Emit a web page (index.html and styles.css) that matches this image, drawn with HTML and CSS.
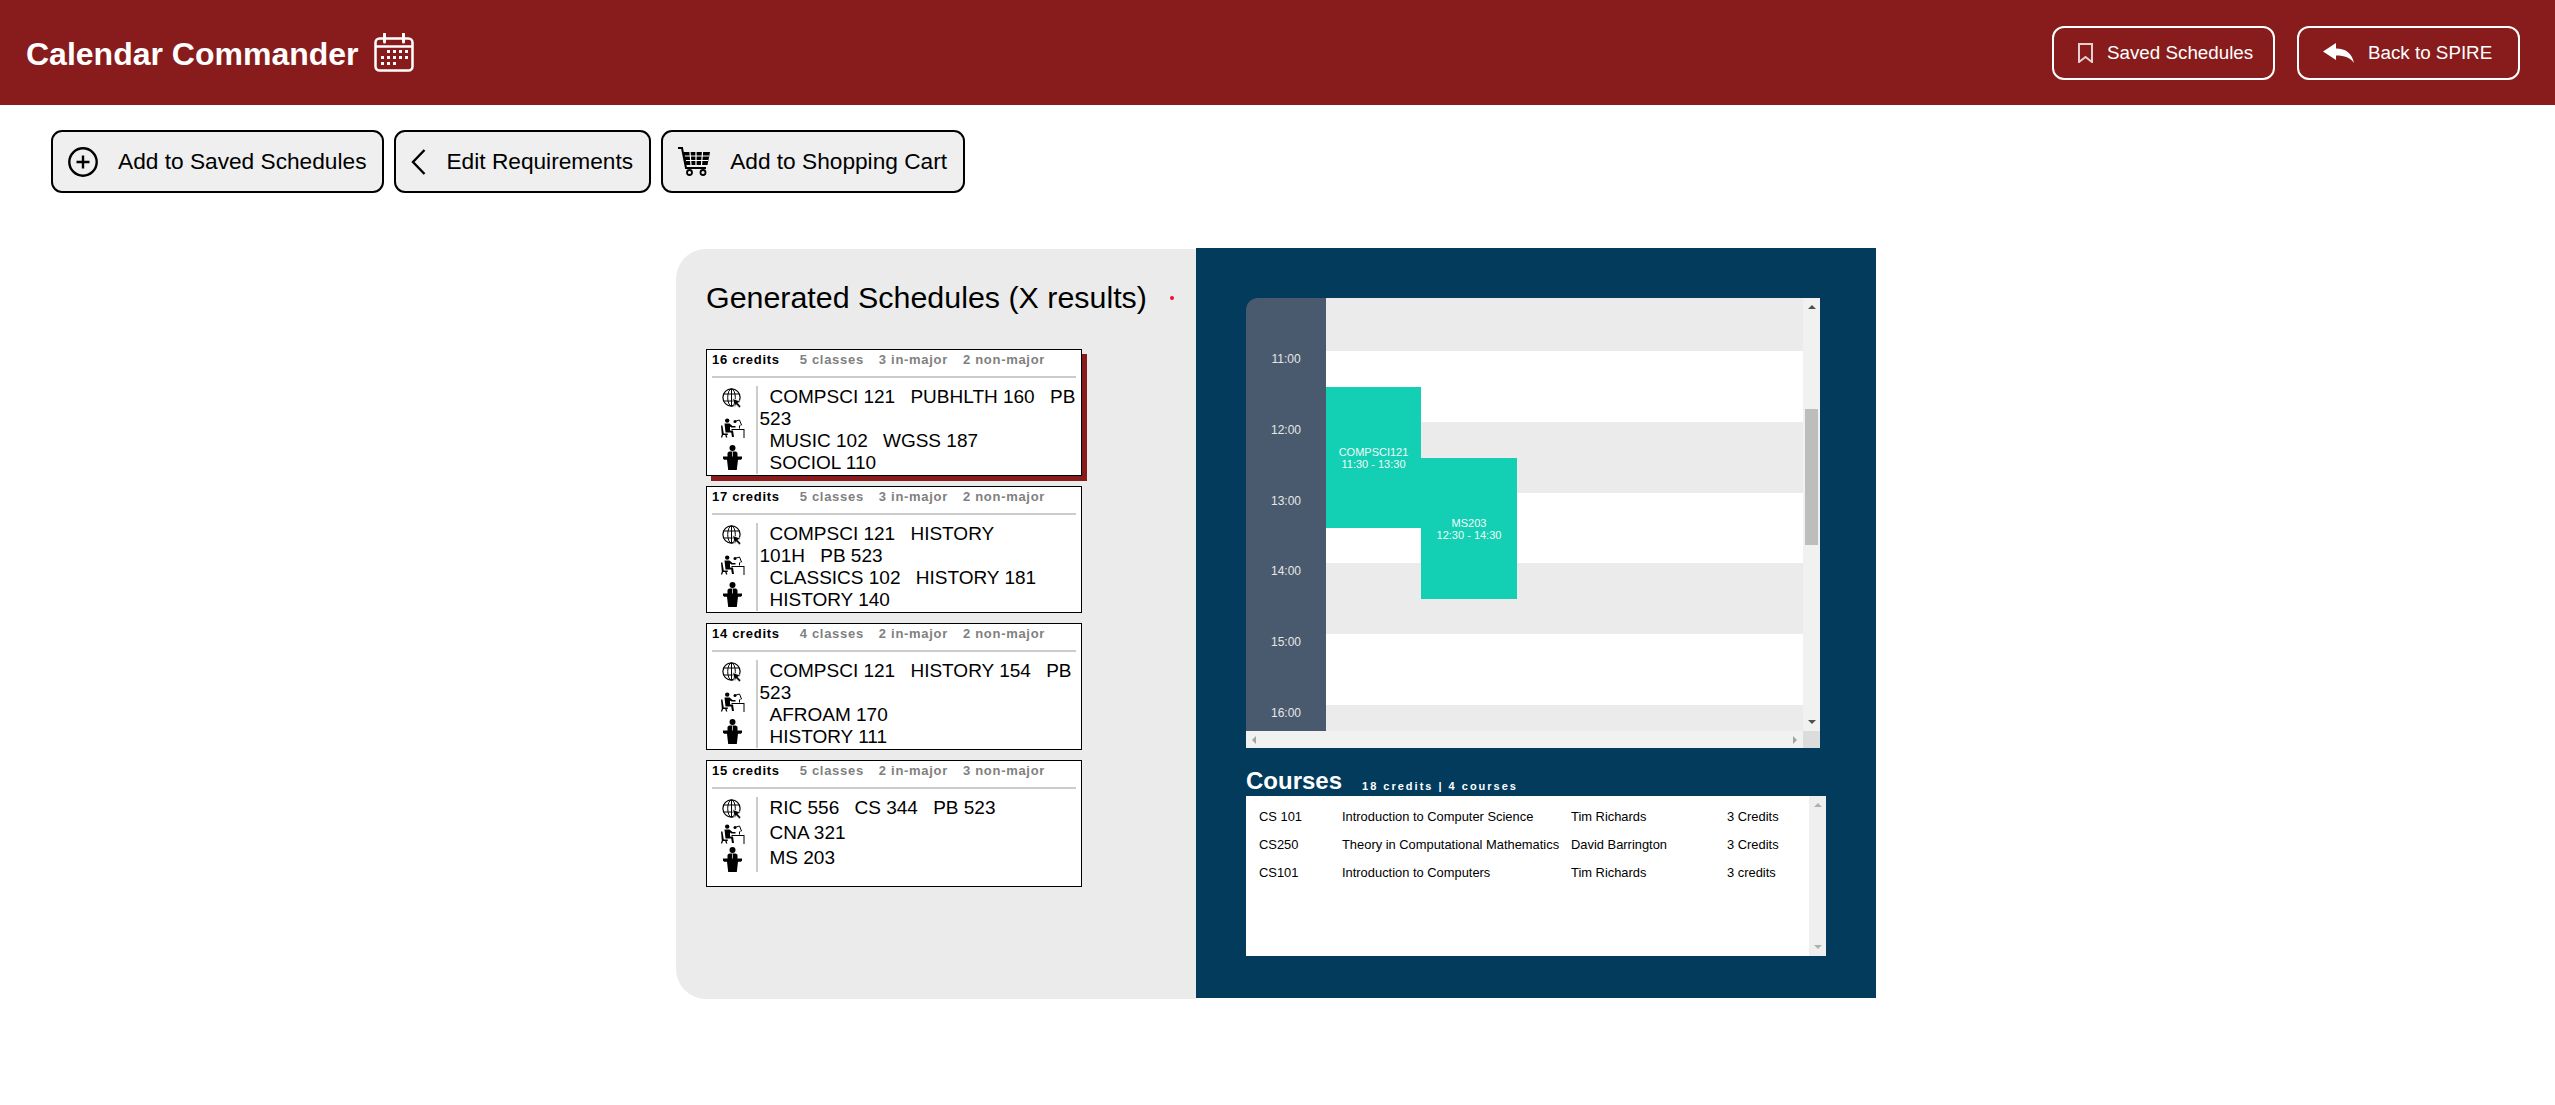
FILE: index.html
```html
<!DOCTYPE html>
<html lang="en">
<head>
    <meta charset="UTF-8">
    <meta name="viewport" content="width=device-width, initial-scale=1.0">
    <title>Calendar Commander</title>
    <link rel="stylesheet" href="styles.css">
</head>
<body>
    <!-- icons used on every schedule card -->
    <svg class="icon-defs" width="0" height="0">
        <symbol id="i-globe" viewBox="0 0 20 20">
            <circle cx="9.5" cy="9.5" r="8.6" fill="none" stroke="#000" stroke-width="1.2"/>
            <ellipse cx="9.5" cy="9.5" rx="3.8" ry="8.6" fill="none" stroke="#000" stroke-width="1"/>
            <path d="M1.5 6h16M1.5 13h16M9.5 1v17" fill="none" stroke="#000" stroke-width="1"/>
            <path d="M10.5 10.5l8.5 3-3.2 1.4 3.2 3.4-1.6 1.6-3.3-3.4-1.3 3.2z" fill="#000" stroke="#fff" stroke-width=".8"/>
        </symbol>
        <symbol id="i-desk" viewBox="0 0 25 20">
            <circle cx="7.2" cy="2.6" r="2.2" fill="#000"/>
            <path d="M4.5 5.5h5l3 2.500h3v1.500h-4l-1.500-1v4h3l1 6.500h-2l-.8-4.500H5.500z" fill="#000"/>
            <path d="M1 7.500h1.400l1.400 8h4V17H6.600l.8 2.500H6L5.200 17H3l-.8 2.500H.9l.9-3z" fill="#000"/>
            <path d="M11.500 11h13v9h-1v-8h-12z" fill="#000"/>
            <path d="M14.500 3.500l5-1.500 2 5-1 .4M19.500 7.500v3" fill="none" stroke="#000" stroke-width="1"/>
            <circle cx="15" cy="3.500" r="1.500" fill="#000"/>
        </symbol>
        <symbol id="i-podium" viewBox="0 0 19 25">
            <circle cx="9.500" cy="3" r="3" fill="#000"/>
            <path d="M4.500 12V8.500c0-1 1-2 2-2h6c1 0 2 1 2 2V12z" fill="#000"/>
            <path d="M0 11.500h19v2.200l-1.200 1H15L13.800 25H5.200L4 14.700H1.200L0 13.700z" fill="#000"/>
            <path d="M9.500 6.500v5" stroke="#fff" stroke-width=".7"/>
        </symbol>
    </svg>

    <header class="topbar">
        <div class="brand">
            <span>Calendar Commander</span>
            <svg class="brand-icon" width="40" height="39" viewBox="0 0 40 39">
                <rect x="1.500" y="5.500" width="37" height="32" rx="4" fill="none" stroke="#fff" stroke-width="2.500"/>
                <path d="M2 13.500h36" stroke="#fff" stroke-width="2.500"/>
                <path d="M10.500 1v8M29.500 1v8" stroke="#fff" stroke-width="3" stroke-linecap="round"/>
                <g fill="#fff">
                    <rect x="13" y="17" width="3" height="3"/><rect x="19" y="17" width="3" height="3"/><rect x="25" y="17" width="3" height="3"/><rect x="31" y="17" width="3" height="3"/>
                    <rect x="7" y="23" width="3" height="3"/><rect x="13" y="23" width="3" height="3"/><rect x="19" y="23" width="3" height="3"/><rect x="25" y="23" width="3" height="3"/><rect x="31" y="23" width="3" height="3"/>
                    <rect x="7" y="29" width="3" height="3"/><rect x="13" y="29" width="3" height="3"/><rect x="19" y="29" width="3" height="3"/>
                </g>
            </svg>
        </div>
        <nav class="topbar-links">
            <a class="outline-btn">
                <svg width="15" height="20" viewBox="0 0 15 20"><path d="M1 1h13v18l-6.500-5L1 19z" fill="none" stroke="#e6cfcf" stroke-width="2"/></svg>
                <span>Saved Schedules</span>
            </a>
            <a class="outline-btn">
                <svg width="31" height="20" viewBox="0 0 31 20"><path d="M0 8.500L13 0v5.500c10 0 16 5 18 14.500-4-5.500-9-7.500-18-7.500V17z" fill="#fff"/></svg>
                <span>Back to SPIRE</span>
            </a>
        </nav>
    </header>

    <div class="toolbar">
        <button class="tool-btn">
            <svg width="30" height="30" viewBox="0 0 30 30"><circle cx="15" cy="15" r="13.700" fill="none" stroke="#000" stroke-width="2.400"/><path d="M15 8.500v13M8.500 15h13" stroke="#000" stroke-width="2.400"/></svg>
            <span>Add to Saved Schedules</span>
        </button>
        <button class="tool-btn">
            <svg width="15" height="26" viewBox="0 0 15 26"><path d="M13.500 1L2 13l11.500 12" fill="none" stroke="#000" stroke-width="2.400"/></svg>
            <span>Edit Requirements</span>
        </button>
        <button class="tool-btn">
            <svg width="32" height="29" viewBox="0 0 32 29">
                <path d="M0 1h4l4 20h20" fill="none" stroke="#000" stroke-width="2"/>
                <path d="M5.500 5H32l-2.500 13H8z" fill="#000"/>
                <path d="M7 9h24M8 13.500h22M12 5l1 13M18 5v13M24.500 5l-1 13" stroke="#fff" stroke-width="1.200"/>
                <circle cx="11.500" cy="25.500" r="2.500" fill="none" stroke="#000" stroke-width="1.800"/>
                <circle cx="25" cy="25.500" r="2.500" fill="none" stroke="#000" stroke-width="1.800"/>
            </svg>
            <span>Add to Shopping Cart</span>
        </button>
    </div>

    <main class="main">
        <section class="results">
            <div class="results-head">
                <h2>Generated Schedules (X results)</h2>
                <span class="red-dot"></span>
            </div>

            <div class="card card-selected">
                <div class="card-head"><b>16 credits</b><span>5 classes</span><span>3 in-major</span><span>2 non-major</span></div>
                <div class="card-body">
                    <div class="card-icons">
                        <svg class="ic-globe"><use href="#i-globe"/></svg>
                        <svg class="ic-desk"><use href="#i-desk"/></svg>
                        <svg class="ic-podium"><use href="#i-podium"/></svg>
                    </div>
                    <div class="card-courses">
                        <div><span>COMPSCI 121</span> <span>PUBHLTH 160</span> <span>PB 523</span></div>
                        <div><span>MUSIC 102</span> <span>WGSS 187</span></div>
                        <div><span>SOCIOL 110</span></div>
                    </div>
                </div>
            </div>

            <div class="card">
                <div class="card-head"><b>17 credits</b><span>5 classes</span><span>3 in-major</span><span>2 non-major</span></div>
                <div class="card-body">
                    <div class="card-icons">
                        <svg class="ic-globe"><use href="#i-globe"/></svg>
                        <svg class="ic-desk"><use href="#i-desk"/></svg>
                        <svg class="ic-podium"><use href="#i-podium"/></svg>
                    </div>
                    <div class="card-courses">
                        <div><span>COMPSCI 121</span> <span>HISTORY 101H</span>&nbsp;<span>PB 523</span></div>
                        <div><span>CLASSICS 102</span> <span>HISTORY 181</span></div>
                        <div><span>HISTORY 140</span></div>
                    </div>
                </div>
            </div>

            <div class="card">
                <div class="card-head"><b>14 credits</b><span>4 classes</span><span>2 in-major</span><span>2 non-major</span></div>
                <div class="card-body">
                    <div class="card-icons">
                        <svg class="ic-globe"><use href="#i-globe"/></svg>
                        <svg class="ic-desk"><use href="#i-desk"/></svg>
                        <svg class="ic-podium"><use href="#i-podium"/></svg>
                    </div>
                    <div class="card-courses">
                        <div><span>COMPSCI 121</span> <span>HISTORY 154</span> <span>PB 523</span></div>
                        <div><span>AFROAM 170</span></div>
                        <div><span>HISTORY 111</span></div>
                    </div>
                </div>
            </div>

            <div class="card card-short">
                <div class="card-head"><b>15 credits</b><span>5 classes</span><span>2 in-major</span><span>3 non-major</span></div>
                <div class="card-body">
                    <div class="card-icons">
                        <svg class="ic-globe"><use href="#i-globe"/></svg>
                        <svg class="ic-desk"><use href="#i-desk"/></svg>
                        <svg class="ic-podium"><use href="#i-podium"/></svg>
                    </div>
                    <div class="card-courses">
                        <div><span>RIC 556</span> <span>CS 344</span> <span>PB 523</span></div>
                        <div><span>CNA 321</span></div>
                        <div><span>MS 203</span></div>
                    </div>
                </div>
            </div>
        </section>

        <section class="detail">
            <div class="cal">
                <div class="cal-rows">
                    <div class="cal-row cal-first"><div class="cal-time"></div><div class="cal-slot grey"></div></div>
                    <div class="cal-row"><div class="cal-time">11:00</div><div class="cal-slot"></div></div>
                    <div class="cal-row"><div class="cal-time">12:00</div><div class="cal-slot grey"></div></div>
                    <div class="cal-row"><div class="cal-time">13:00</div><div class="cal-slot"></div></div>
                    <div class="cal-row"><div class="cal-time">14:00</div><div class="cal-slot grey"></div></div>
                    <div class="cal-row"><div class="cal-time">15:00</div><div class="cal-slot"></div></div>
                    <div class="cal-row"><div class="cal-time">16:00</div><div class="cal-slot grey"></div></div>
                    <div class="event event-a">COMPSCI121<br>11:30 - 13:30</div>
                    <div class="event event-b">MS203<br>12:30 - 14:30</div>
                </div>
                <div class="vbar">
                    <i class="arrow-up"></i>
                    <i class="vthumb"></i>
                    <i class="arrow-down"></i>
                </div>
                <div class="hbar">
                    <i class="arrow-left"></i>
                    <i class="arrow-right"></i>
                </div>
                <div class="bar-corner"></div>
            </div>

            <div class="courses-head">
                <h3>Courses</h3>
                <span>18 credits | 4 courses</span>
            </div>
            <div class="courses-box">
                <div class="course-list">
                    <div class="course-row"><span>CS 101</span><span>Introduction to Computer Science</span><span>Tim Richards</span><span>3 Credits</span></div>
                    <div class="course-row"><span>CS250</span><span>Theory in Computational Mathematics</span><span>David Barrington</span><span>3 Credits</span></div>
                    <div class="course-row"><span>CS101</span><span>Introduction to Computers</span><span>Tim Richards</span><span>3 credits</span></div>
                </div>
                <div class="list-bar">
                    <i class="arrow-up"></i>
                    <i class="arrow-down"></i>
                </div>
            </div>
        </section>
    </main>
</body>
</html>
```

FILE: styles.css
```css
/* Calendar Commander - results page */
body {
    font-family: "Liberation Sans", Arial, sans-serif;
    background-color: #fff;
    color: #000;
    margin: 0;
    padding: 0;
}

.icon-defs {
    position: absolute;
}

/* top bar */
.topbar {
    height: 105px;
    background: #881c1c;
    color: #fff;
    display: flex;
    justify-content: space-between;
    align-items: center;
    padding: 0 35px 0 26px;
}

.brand {
    display: flex;
    align-items: center;
    gap: 15px;
    font-size: 32px;
    font-weight: bold;
}

.brand span {
    position: relative;
    top: 2px;
}

.topbar-links {
    display: flex;
    gap: 22px;
}

.outline-btn {
    box-sizing: border-box;
    width: 223px;
    height: 54px;
    border: 2px solid #fff;
    border-radius: 12px;
    display: flex;
    align-items: center;
    gap: 14px;
    padding-left: 24px;
    font-size: 18.8px;
}

/* action buttons */
.toolbar {
    display: flex;
    gap: 10px;
    padding: 25px 0 0 51px;
}

.tool-btn {
    box-sizing: border-box;
    height: 63px;
    padding: 0 16px 0 15px;
    background: #efefef;
    border: 2px solid #000;
    border-radius: 11px;
    display: flex;
    align-items: center;
    gap: 20px;
    font-family: inherit;
    font-size: 22.7px;
    color: #000;
}

/* main area */
.main {
    display: flex;
    justify-content: center;
    align-items: flex-start;
    padding: 55px 3px 0 0;
}

.results {
    box-sizing: border-box;
    width: 520px;
    height: 750px;
    margin-top: 1px;
    padding: 0 0 0 30px;
    background: #ebebeb;
    border-radius: 30px 0 0 30px;
}

.results-head {
    height: 100px;
    display: flex;
    align-items: center;
    gap: 23px;
    padding-bottom: 3px;
    box-sizing: border-box;
}

.results-head h2 {
    margin: 0;
    font-size: 30.4px;
    font-weight: normal;
}

.red-dot {
    width: 4px;
    height: 4px;
    border-radius: 50%;
    background: #e8112d;
}

.card {
    box-sizing: border-box;
    width: 376px;
    height: 127px;
    margin-bottom: 10px;
    padding: 0 5px;
    background: #fff;
    border: 1px solid #000;
}

.card-selected {
    box-shadow: 5px 5px 0 #881c1c;
}

.card-head {
    height: 26px;
    border-bottom: 2px solid #ccc;
    display: flex;
    gap: 15px;
    align-items: flex-start;
    font-size: 13px;
    letter-spacing: 0.7px;
    line-height: 20px;
    font-weight: bold;
    color: #808080;
}

.card-head b {
    color: #000;
    margin-right: 5px;
}

.card-body {
    display: flex;
    margin-top: 8px;
}

.card-icons {
    box-sizing: border-box;
    width: 44px;
    padding-right: 4px;
    display: flex;
    flex-direction: column;
    align-items: center;
    gap: 4.5px;
}

.card-short .card-icons {
    gap: 0;
}

.ic-globe {
    width: 20px;
    height: 20px;
    margin: 2px 0 3px;
}

.ic-desk {
    width: 25px;
    height: 20px;
    margin: 2px 0 3px;
}

.ic-podium {
    width: 19px;
    height: 25px;
}

.card-courses {
    flex: 1;
    display: flex;
    flex-direction: column;
    margin-right: -5px;
    padding-left: 1.5px;
    border-left: 2px solid #ccc;
    font-size: 19px;
    line-height: 22px;
}

.card-courses div {
    flex: 1 1 auto;
}

.card-courses span {
    margin-left: 10px;
}

/* right side */
.detail {
    box-sizing: border-box;
    width: 680px;
    height: 750px;
    padding: 50px 0 0 50px;
    background: #023b5c;
}

.cal {
    width: 574px;
    height: 450px;
    display: grid;
    grid-template-columns: 557px 17px;
    grid-template-rows: 433px 17px;
}

.cal-rows {
    position: relative;
    overflow: hidden;
}

.cal-row {
    display: flex;
    height: 70.8px;
}

.cal-first {
    height: 53px;
}

.cal-time {
    width: 80px;
    background: #4a5a6e;
    color: #e6e6e6;
    font-size: 12px;
    text-align: center;
    padding-top: 1px;
    line-height: 14px;
}

.cal-first .cal-time {
    border-top-left-radius: 12px;
}

.cal-slot {
    flex: 1;
    background: #fff;
}

.cal-slot.grey {
    background: #ebebeb;
}

.event {
    position: absolute;
    display: flex;
    align-items: center;
    justify-content: center;
    text-align: center;
    background: #13cfb3;
    color: #f2fbf8;
    font-size: 11px;
    line-height: 12px;
}

.event-a {
    left: 80px;
    top: 89px;
    width: 95px;
    height: 141px;
}

.event-b {
    left: 175px;
    top: 160px;
    width: 96px;
    height: 141px;
}

/* scrollbars */
.vbar {
    background: #f1f1f1;
    display: flex;
    flex-direction: column;
    align-items: center;
    padding-top: 7px;
    box-sizing: border-box;
}

.vthumb {
    width: 13px;
    height: 136px;
    margin: 100px 0 175px;
    background: #bdbdbd;
}

.hbar {
    background: #f1f1f1;
    display: flex;
    justify-content: space-between;
    align-items: center;
    padding: 0 6px;
}

.bar-corner {
    background: #dcdcdc;
}

.arrow-up,
.arrow-down,
.arrow-left,
.arrow-right {
    display: block;
    width: 0;
    height: 0;
    border-style: solid;
    border-color: transparent;
}

.arrow-up {
    border-width: 0 4px 4px;
    border-bottom-color: #505050;
}

.arrow-down {
    border-width: 4px 4px 0;
    border-top-color: #505050;
}

.arrow-left {
    border-width: 4px 4px 4px 0;
    border-right-color: #a3a3a3;
}

.arrow-right {
    border-width: 4px 0 4px 4px;
    border-left-color: #a3a3a3;
}

/* course list */
.courses-head {
    height: 48px;
    display: flex;
    align-items: flex-end;
    gap: 20px;
    color: #fff;
}

.courses-head h3 {
    margin: 0;
    font-size: 24px;
    line-height: 30px;
}

.courses-head span {
    font-size: 11px;
    font-weight: bold;
    letter-spacing: 2px;
    line-height: 20px;
}

.courses-box {
    width: 580px;
    height: 160px;
    display: flex;
    background: #fff;
}

.course-list {
    flex: 1;
    padding: 6px 0 0 13px;
    font-size: 12.9px;
}

.course-row {
    display: grid;
    grid-template-columns: 83px 229px 156px auto;
    height: 28px;
    align-items: center;
}

.list-bar {
    box-sizing: border-box;
    width: 17px;
    background: #efefef;
    display: flex;
    flex-direction: column;
    align-items: center;
    justify-content: space-between;
    padding: 7px 0;
}

.list-bar .arrow-up {
    border-bottom-color: #b0b0b0;
}

.list-bar .arrow-down {
    border-top-color: #b0b0b0;
}
```
